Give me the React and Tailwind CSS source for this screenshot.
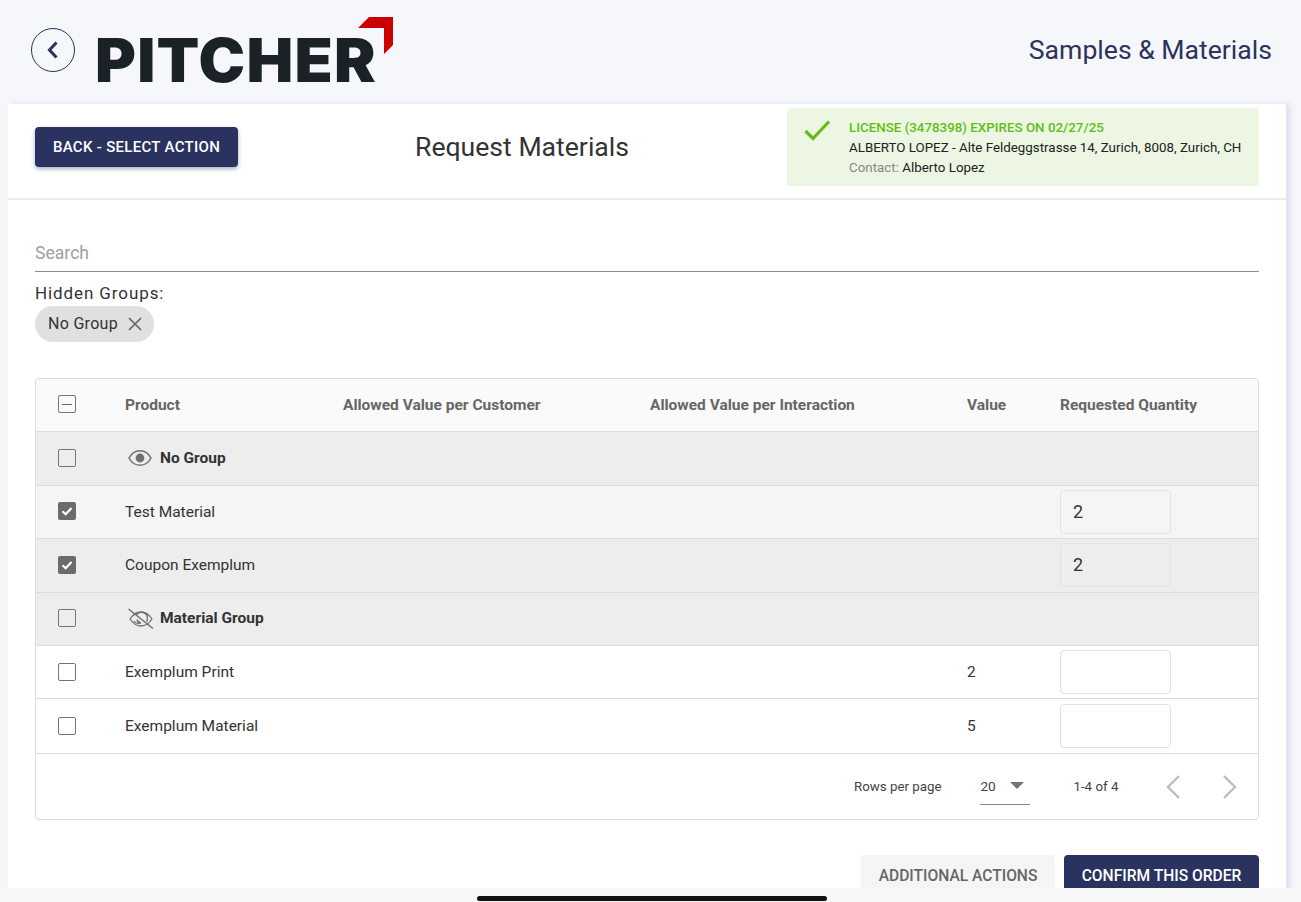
import React from "react";

const gridCols = "grid grid-cols-[89px_218px_307px_317px_93px_1fr] items-center";

function Box({ state }) {
  if (state === "checked")
    return (
      <span className="flex h-[18px] w-[18px] items-center justify-center rounded-[2px] bg-[#6b6b6b]">
        <svg width="14" height="14" viewBox="0 0 14 14" fill="none"><path d="M2.500 7.200 5.700 10.200 11.500 4" stroke="#fff" strokeWidth="2.200" /></svg>
      </span>
    );
  return (
    <span className="flex h-[18px] w-[18px] items-center justify-center rounded-[2px] border border-[#757575] bg-transparent">
      {state === "mixed" && <span className="h-px w-[10px] bg-[#666]" />}
    </span>
  );
}

function Eye() {
  return (
    <svg width="24" height="24" viewBox="0 0 24 24" fill="none" stroke="#6f6f6f" strokeWidth="1.500">
      <path d="M1 12C3.800 6.800 7.800 4.800 12 4.800s8.200 2 11 7.200c-2.800 5.200-6.800 7.200-11 7.200S3.800 17.200 1 12Z" />
      <circle cx="12" cy="12" r="4.400" fill="#6f6f6f" stroke="none" />
    </svg>
  );
}

function EyeOff() {
  return (
    <svg width="26" height="26" viewBox="0 0 26 26" fill="none" stroke="#6f6f6f" strokeWidth="1.300">
      <path d="M2 13C5 8.500 8.500 6 13 6s8 2.500 11 7c-3 4.500-6.500 7-11 7S5 17.500 2 13Z" />
      <path d="M5.500 15.500c2 1.300 4 2 6 2M8.500 9A5.500 5.500 0 0 1 18.500 15.500M9 13.500a4.500 4.500 0 0 0 4 3.500" />
      <path d="M0.500 3 25 22.500" strokeWidth="1.500" />
    </svg>
  );
}

function Row({ bg, box, h, name, value, qty, group, icon, textClass = "pt-[2px]", qtyClass = "", boxClass = "mb-[2px]" }) {
  return (
    <div className={`${gridCols} ${h} ${bg} border-b border-[#dcdcdc] text-[15.500px] text-[#333]`}>
      <div className={`flex justify-start pl-[22px] ${boxClass}`}><Box state={box} /></div>
      {group ? (
        <div className="col-span-2 flex items-center font-bold text-[#333]">
          <span className="flex w-[35px] items-center justify-start">{icon}</span>
          {name}
        </div>
      ) : (
        <div className={`col-span-2 ${textClass}`}>{name}</div>
      )}
      <div />
      <div className={textClass}>{value}</div>
      {group ? <div /> : (
        <div className={`flex h-[44px] w-[111px] items-center rounded-[4px] border border-[#e2e2e2] pb-[2px] pl-[12px] text-[18px] ${bg} ${qtyClass}`}>{qty}</div>
      )}
    </div>
  );
}

export default function App() {
  return (
    <div className="relative flex h-[902px] w-[1301px] flex-col overflow-hidden bg-[#f6f7fa] font-['Roboto',sans-serif]">
      <header className="flex h-[104px] shrink-0 items-start pl-[31px] pr-[29px]">
        <button className="mt-[28px] flex h-[44px] w-[44px] items-center justify-center rounded-full border border-[#2a3360]">
          <svg width="18" height="20" viewBox="0 0 18 20" fill="none"><path d="M12.500 2.500 5.500 10l7 7.500" stroke="#2a3360" strokeWidth="3" /></svg>
        </button>
        <div className="relative ml-[22px] h-[104px] w-[300px]">
          <span className="absolute left-[-2px] top-[25px] origin-left scale-x-[1.04] font-['Inter',sans-serif] text-[60px] font-black leading-[70px] tracking-[1.200px] text-[#1a2228]">PITCHER</span>
          <svg className="absolute left-[261px] top-[17px]" width="35" height="37" viewBox="0 0 35 37"><path d="M11 0H35V28L26 37V11H0Z" fill="#cc0000" /></svg>
        </div>
        <h1 className="ml-auto mt-[33px] text-[26.600px] leading-[34px] text-[#2a3360]">Samples &amp; Materials</h1>
      </header>

      <main className="ml-[8px] w-[1278px] flex-1 bg-white shadow-[4px_0_6px_rgba(90,100,190,0.16)]">
        <section className="flex h-[96px] items-start border-b-2 border-[#eaeaea] pl-[27px] pr-[27px]">
          <button className="mt-[23px] h-[40px] w-[203px] rounded-[4px] bg-[#2a3360] pt-px text-[15px] font-medium tracking-[0.3px] text-white shadow-[0_2px_4px_rgba(42,51,96,0.4)]">BACK - SELECT ACTION</button>
          <h2 className="ml-[177px] mt-[26px] text-[26.600px] leading-[34px] text-[#333]">Request Materials</h2>
          <div className="ml-auto mt-[4px] flex h-[78px] w-[472px] rounded-[4px] bg-[#ecf6e2]">
            <svg className="ml-[16px] mt-[10px]" width="30" height="26" viewBox="0 0 30 26" fill="none"><path d="M2.500 13 10 20.500 26 3.500" stroke="#62bd12" strokeWidth="3.200" /></svg>
            <div className="ml-[16px] pt-[10px] text-[13.350px] leading-[20px] text-[#222]">
              <div className="font-medium text-[#62bd12]">LICENSE (3478398) EXPIRES ON 02/27/25</div>
              <div>ALBERTO LOPEZ - Alte Feldeggstrasse 14, Zurich, 8008, Zurich, CH</div>
              <div><span className="text-[#888]">Contact:</span> Alberto Lopez</div>
            </div>
          </div>
        </section>

        <section className="px-[27px]">
          <div className="mt-[37px] h-[35px] border-b border-[#8a8a8a] text-[17.600px] leading-[32px] text-[#a0a0a0]">Search</div>
          <div className="mt-[9px] text-[17px] leading-[24px] tracking-[0.9px] text-[#333]">Hidden Groups:</div>
          <div className="mt-px flex h-[36px] w-[119px] items-center rounded-full bg-[#e0e0e0] pl-[13px] text-[16px] tracking-[0.3px] text-[#333]">
            No Group
            <svg className="ml-[9px]" width="16" height="16" viewBox="0 0 16 16" fill="none"><path d="M2 2l12 12M14 2 2 14" stroke="#666" strokeWidth="1.700" /></svg>
          </div>

          <div className="mt-[36px] overflow-hidden rounded-[4px] border border-[#dcdcdc]">
            <div className={`${gridCols} h-[53px] border-b border-[#dcdcdc] bg-[#fafafa] text-[15.500px] font-bold text-[#666]`}>
              <div className="mb-[2px] flex justify-start pl-[22px]"><Box state="mixed" /></div>
              <div className="pt-[2px]">Product</div>
              <div className="pt-[2px]">Allowed Value per Customer</div>
              <div className="pt-[2px]">Allowed Value per Interaction</div>
              <div className="pt-[2px]">Value</div>
              <div className="pt-[2px]">Requested Quantity</div>
            </div>
            <Row bg="bg-[#ededed]" h="h-[54px]" name="No Group" group icon={<span className="mb-[2px] ml-[3px]"><Eye /></span>} />
            <Row bg="bg-[#f5f5f5]" h="h-[53px]" box="checked" name="Test Material" qty="2" />
            <Row bg="bg-[#ededed]" h="h-[54px]" box="checked" name="Coupon Exemplum" qty="2" textClass="" qtyClass="mb-px" />
            <Row bg="bg-[#ededed]" h="h-[53px]" name="Material Group" group icon={<span className="ml-[3px]"><EyeOff /></span>} />
            <Row bg="bg-white" h="h-[53px]" name="Exemplum Print" value="2" boxClass="" />
            <Row bg="bg-white" h="h-[55px]" name="Exemplum Material" value="5" boxClass="" />
            <div className="flex h-[65px] items-center text-[13.300px] text-[#444]">
              <span className="ml-[818px]">Rows per page</span>
              <div className="relative ml-[39px] flex h-[37px] w-[50px] items-center border-b border-[#8a8a8a] text-[13.600px]">
                20
                <svg className="absolute right-[6px] top-[14px]" width="14" height="8" viewBox="0 0 14 8"><path d="M0 0h14L7 7Z" fill="#757575" /></svg>
              </div>
              <span className="ml-[43px]">1-4 of 4</span>
              <svg className="ml-[46px]" width="18" height="26" viewBox="0 0 18 26" fill="none"><path d="M15 2 4 13l11 11" stroke="#bdbdbd" strokeWidth="2.400" /></svg>
              <svg className="ml-[39px]" width="18" height="26" viewBox="0 0 18 26" fill="none"><path d="M3 2l11 11L3 24" stroke="#bdbdbd" strokeWidth="2.400" /></svg>
            </div>
          </div>

          <div className="mt-[35px] flex justify-end gap-[9px]">
            <button className="h-[44px] w-[194px] rounded-[4px] bg-[#f5f5f5] text-[15.600px] font-medium text-[#666]">ADDITIONAL ACTIONS</button>
            <button className="h-[44px] w-[195px] rounded-[4px] bg-[#2a3360] text-[15.600px] font-medium text-white">CONFIRM THIS ORDER</button>
          </div>
        </section>
      </main>

      <div className="absolute bottom-0 left-0 h-[14px] w-full bg-[#f7f7f7]">
        <div className="ml-[477px] mt-[8px] h-[5px] w-[350px] rounded-full bg-[#111]" />
      </div>
    </div>
  );
}
